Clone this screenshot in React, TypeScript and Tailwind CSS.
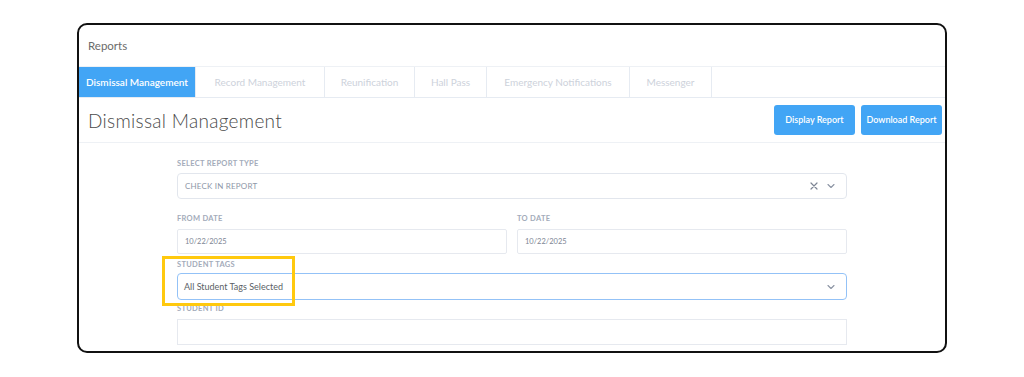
import React from "react";

const TABS = [
  { label: "Dismissal Management", width: "w-[117px]", active: true },
  { label: "Record Management", width: "w-[129px]", active: false },
  { label: "Reunification", width: "w-[90px]", active: false },
  { label: "Hall Pass", width: "w-[72px]", active: false },
  { label: "Emergency Notifications", width: "w-[143px]", active: false },
  { label: "Messenger", width: "w-[82px]", active: false },
];

const Chevron = () => (
  <svg width="10" height="10" viewBox="0 0 10 10" fill="none">
    <path d="M2 3.5 L5 6.5 L8 3.5" stroke="#8b93a3" strokeWidth="1.1" strokeLinecap="round" strokeLinejoin="round" />
  </svg>
);

const Cross = () => (
  <svg width="10" height="10" viewBox="0 0 10 10" fill="none">
    <path d="M2 2 L8 8 M8 2 L2 8" stroke="#7d8594" strokeWidth="1.2" strokeLinecap="round" />
  </svg>
);

const Label = ({ children }: { children: React.ReactNode }) => (
  <div className="h-[10px] text-[7.5px] leading-[10px] font-bold uppercase tracking-[0.3px] text-[#a3abba]">
    {children}
  </div>
);

export default function App() {
  return (
    <div
      className="h-[377px] w-full bg-white px-[77px] pt-[23px]"
      style={{ fontFamily: "Lato, 'Open Sans', sans-serif" }}
    >
      <div className="h-[330px] overflow-hidden rounded-[10px] border-2 border-[#111] bg-white">
        {/* header */}
        <div className="flex h-[42px] items-center border-b border-[#eef1f5] pl-[9px] text-[11.5px] text-[#6b6b6b]">
          Reports
        </div>

        {/* tabs */}
        <div className="flex h-[31px] border-b border-[#e6ebf2]">
          {TABS.map((tab) => (
            <div
              key={tab.label}
              className={`${tab.width} flex items-center justify-center border-r border-[#e6ebf2] text-[10px] ${
                tab.active ? "bg-[#42a5f5] font-semibold text-white" : "text-[#cdd2db]"
              }`}
            >
              {tab.label}
            </div>
          ))}
        </div>

        {/* title row */}
        <div className="flex h-[45px] items-center justify-between border-b border-[#eef1f5] pl-[9px] pr-[3px]">
          <h1 className="pt-[2px] text-[19px] font-light tracking-[0.3px] text-[#4a4a4a]">Dismissal Management</h1>
          <div className="flex gap-[6px]">
            <button className="h-[30px] w-[81px] rounded-[3px] bg-[#42a5f5] text-[9px] font-semibold text-white">
              Display Report
            </button>
            <button className="h-[30px] w-[81px] rounded-[3px] bg-[#42a5f5] text-[9px] font-semibold text-white">
              Download Report
            </button>
          </div>
        </div>

        {/* form */}
        <div className="px-[98px] pt-[16px]">
          <Label>Select Report Type</Label>
          <div className="mt-[4px] flex h-[26px] items-center justify-between rounded-[4px] border border-[#e2e6ed] pl-[7px] pr-[10px]">
            <span className="text-[8px] uppercase tracking-[0.2px] text-[#8e97a8]">Check in Report</span>
            <div className="flex items-center gap-[7px]">
              <Cross />
              <Chevron />
            </div>
          </div>

          <div className="mt-[15px] grid grid-cols-2 gap-[10px]">
            <div>
              <Label>From Date</Label>
              <div className="mt-[5px] flex h-[25px] items-center rounded-[2px] border border-[#e6e9ef] pl-[7px] text-[7.5px] text-[#7d8594]">
                10/22/2025
              </div>
            </div>
            <div>
              <Label>To Date</Label>
              <div className="mt-[5px] flex h-[25px] items-center rounded-[2px] border border-[#e6e9ef] pl-[7px] text-[7.5px] text-[#7d8594]">
                10/22/2025
              </div>
            </div>
          </div>

          <div className="relative mt-[6px]">
            <Label>Student Tags</Label>
            <div className="mt-[3px] flex h-[27px] items-center justify-between rounded-[4px] border-[1.5px] border-[#93c2f7] pl-[6px] pr-[10px]">
              <span className="text-[9px] text-[#5b5f66]">All Student Tags Selected</span>
              <Chevron />
            </div>
            <div className="pointer-events-none absolute left-[-15px] top-[-4px] h-[50px] w-[133px] border-[3px] border-[#ffc90e]" />
          </div>

          <div className="mt-[4px]">
            <Label>Student ID</Label>
            <div className="mt-[5px] h-[26px] border border-[#e6e9ef]" />
          </div>
        </div>
      </div>
    </div>
  );
}
